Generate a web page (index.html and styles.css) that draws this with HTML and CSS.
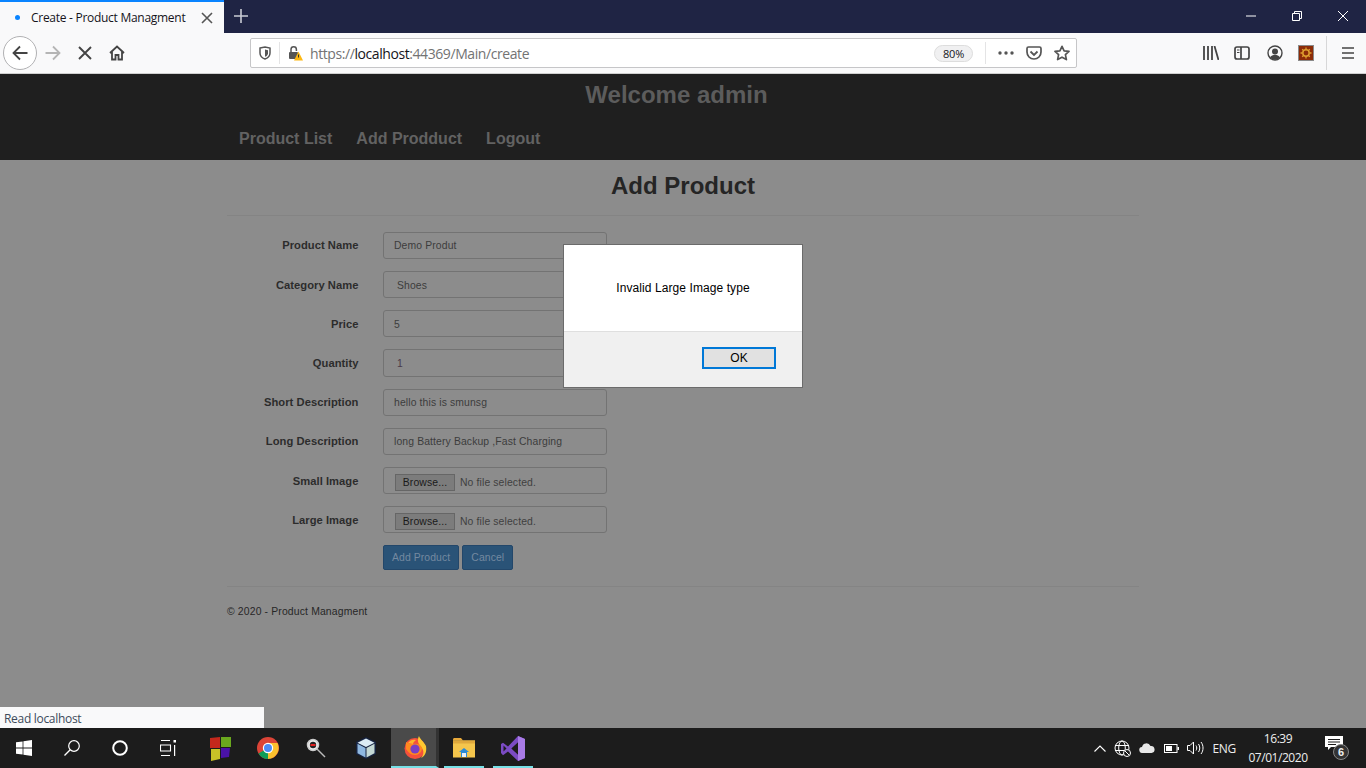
FILE: index.html
```html
<!DOCTYPE html>
<html lang="en">
<head>
<meta charset="utf-8">
<title>Create - Product Managment</title>
<link rel="stylesheet" href="styles.css">
</head>
<body>
<div class="screen">
  <header class="tabbar">
    <div class="tab">
      <span class="tab-dot"></span>
      <span class="tab-title">Create - Product Managment</span>
      <svg class="tab-close" width="12" height="12" viewBox="0 0 12 12"><path d="M1 1l10 10M11 1L1 11" stroke="#555" stroke-width="1.6" fill="none"/></svg>
    </div>
    <svg class="new-tab" width="14" height="14" viewBox="0 0 14 14"><path d="M7 0v14M0 7h14" stroke="#c9cbd4" stroke-width="1.6" fill="none"/></svg>
    <div class="win-controls">
      <svg width="10" height="10" viewBox="0 0 10 10"><path d="M0 5h10" stroke="#fff" stroke-width="1" fill="none"/></svg>
      <svg width="10" height="10" viewBox="0 0 10 10"><path d="M.5 2.500h7v7h-7zM2.500 2.500v-2h7v7h-2" stroke="#fff" stroke-width="1" fill="none"/></svg>
      <svg width="10" height="10" viewBox="0 0 10 10"><path d="M0 0l10 10M10 0L0 10" stroke="#fff" stroke-width="1" fill="none"/></svg>
    </div>
  </header>

  <nav class="toolbar">
    <div class="back-btn">
      <svg width="16" height="16" viewBox="0 0 16 16"><path d="M15.500 8H1.500M8 1.500L1.500 8 8 14.500" stroke="#444" stroke-width="1.800" fill="none"/></svg>
    </div>
    <svg class="tb-forward" width="16" height="16" viewBox="0 0 16 16"><path d="M.5 8h14M8 1.500L14.500 8 8 14.500" stroke="#b5b5b5" stroke-width="1.800" fill="none"/></svg>
    <svg class="tb-stop" width="14" height="14" viewBox="0 0 14 14"><path d="M1 1l12 12M13 1L1 13" stroke="#444" stroke-width="1.900" fill="none"/></svg>
    <svg class="tb-home" width="16" height="16" viewBox="0 0 16 16"><path d="M1 8l7-6.500L15 8M3 6.500V14.500h3.500V10h3v4.500H13V6.500" stroke="#444" stroke-width="1.800" fill="none"/></svg>

    <div class="urlbar">
      <svg class="url-shield" width="12" height="14" viewBox="0 0 12 14"><path d="M1 2l5-1 5 1v5c0 3-2 5-5 6-3-1-5-3-5-6z" stroke="#555" stroke-width="1.500" fill="none"/><path d="M6 3.500l3 .7v3c0 1.600-1 2.800-3 3.600z" fill="#555"/></svg>
      <span class="url-sep"></span>
      <svg class="url-lock" width="15" height="16" viewBox="0 0 15 16"><path d="M3 7V4.500a2.700 2.700 0 0 1 5.400 0V6" stroke="#555" stroke-width="1.500" fill="none"/><rect x="1" y="7" width="9" height="7" rx="1" fill="#555"/><path d="M10.500 6.500L15 15.500H6z" fill="#fdb813"/><path d="M10.500 9.500v3" stroke="#333" stroke-width="1"/></svg>
      <span class="url-text">https://<b class="url-host">localhost</b>:44369/Main/create</span>
      <span class="zoom-pill">80%</span>
      <span class="url-sep sep-right"></span>
      <svg class="url-dots" width="16" height="4" viewBox="0 0 16 4"><circle cx="2" cy="2" r="1.700" fill="#555"/><circle cx="8" cy="2" r="1.700" fill="#555"/><circle cx="14" cy="2" r="1.700" fill="#555"/></svg>
      <svg class="url-pocket" width="16" height="14" viewBox="0 0 16 14"><path d="M1 2.500C1 1.500 1.500 1 2.500 1h11c1 0 1.500.5 1.500 1.500V6c0 4-3 7-7 7S1 10 1 6z" stroke="#555" stroke-width="1.700" fill="none"/><path d="M4.500 5.500L8 9l3.500-3.500" stroke="#555" stroke-width="1.800" fill="none"/></svg>
      <svg class="url-star" width="16" height="16" viewBox="0 0 16 16"><path d="M8 1.300l2.100 4.500 4.900.6-3.600 3.300 1 4.900L8 12.200l-4.400 2.400 1-4.900L1 6.400l4.900-.6z" stroke="#555" stroke-width="1.700" stroke-linejoin="round" fill="none"/></svg>
    </div>

    <svg class="tb-library" width="16" height="14" viewBox="0 0 16 14"><path d="M1 0v14M5 0v14M9 0v14M11.500 0l4 14" stroke="#444" stroke-width="1.800" fill="none"/></svg>
    <svg class="tb-sidebar" width="16" height="14" viewBox="0 0 16 14"><rect x="1" y="1" width="14" height="12" rx="2" stroke="#444" stroke-width="1.700" fill="none"/><path d="M7 1v12" stroke="#444" stroke-width="1.700"/><path d="M3 4h2.500M3 6.500h2.500" stroke="#444" stroke-width="1"/></svg>
    <svg class="tb-account" width="16" height="16" viewBox="0 0 16 16"><circle cx="8" cy="8" r="7" stroke="#444" stroke-width="1.400" fill="none"/><circle cx="8" cy="6.500" r="3" fill="#444"/><path d="M3 12.500c1-2 3-2.800 5-2.800s4 .8 5 2.800c-1.500 1.500-3 2.200-5 2.200s-3.500-.7-5-2.200z" fill="#444"/></svg>
    <svg class="tb-ext" width="16" height="16" viewBox="0 0 16 16"><rect width="16" height="16" fill="#8a8a8a"/><rect x="1" y="1" width="14" height="14" fill="#8c2c08"/><circle cx="8" cy="8" r="3.200" stroke="#e0a030" stroke-width="1.500" fill="none"/><path d="M8 2.500v2M8 11.500v2M2.500 8h2M11.500 8h2M4.200 4.200l1.400 1.400M10.400 10.400l1.400 1.400M11.800 4.200l-1.400 1.400M5.600 10.400l-1.400 1.400" stroke="#e0a030" stroke-width="1.300"/></svg>
    <span class="tb-sep"></span>
    <svg class="tb-menu" width="12" height="12" viewBox="0 0 12 12"><path d="M0 1h12M0 6h12M0 11h12" stroke="#444" stroke-width="1.700" fill="none"/></svg>
  </nav>

  <main class="page">
    <div class="site-nav">
      <h1 class="welcome">Welcome admin</h1>
      <ul class="nav-links">
        <li>Product List</li>
        <li>Add Prodduct</li>
        <li>Logout</li>
      </ul>
    </div>
    <div class="content">
      <h2 class="page-title">Add Product</h2>
      <div class="rule rule-top"></div>
      <form class="form">
        <div class="row"><label class="lbl">Product Name</label><div class="field">Demo Produt</div></div>
        <div class="row"><label class="lbl">Category Name</label><div class="field field-select field-low">Shoes</div></div>
        <div class="row"><label class="lbl">Price</label><div class="field field-low">5</div></div>
        <div class="row"><label class="lbl">Quantity</label><div class="field field-select field-low field-num">1</div></div>
        <div class="row"><label class="lbl">Short Description</label><div class="field">hello this is smunsg</div></div>
        <div class="row"><label class="lbl">Long Description</label><div class="field">long Battery Backup ,Fast Charging</div></div>
        <div class="row"><label class="lbl">Small Image</label><div class="field field-file"><span class="browse">Browse...</span><span class="nofile">No file selected.</span></div></div>
        <div class="row"><label class="lbl">Large Image</label><div class="field field-file"><span class="browse">Browse...</span><span class="nofile">No file selected.</span></div></div>
        <div class="actions"><span class="btn">Add Product</span><span class="btn">Cancel</span></div>
      </form>
      <div class="rule rule-bottom"></div>
      <footer class="foot">© 2020 - Product Managment</footer>
    </div>

    <div class="status">Read localhost</div>

    <div class="dialog">
      <div class="dialog-body">Invalid Large Image type</div>
      <div class="dialog-foot"><span class="ok">OK</span></div>
    </div>
  </main>

  <footer class="taskbar">
    <div class="task"><svg width="16" height="16" viewBox="0 0 16 16"><path d="M0 2.300l6.600-.9v6.200H0zM7.400 1.300L16 0v7.600H7.400zM0 8.400h6.600v6.200L0 13.700zM7.400 8.400H16V16l-8.600-1.300z" fill="#fff"/></svg></div>
    <div class="task"><svg width="16" height="16" viewBox="0 0 16 16"><circle cx="10" cy="6" r="5.300" stroke="#fff" stroke-width="1.200" fill="none"/><path d="M6.200 9.800L.5 15.500" stroke="#fff" stroke-width="1.300"/></svg></div>
    <div class="task"><svg width="16" height="16" viewBox="0 0 16 16"><circle cx="8" cy="8" r="6.800" stroke="#fff" stroke-width="2" fill="none"/></svg></div>
    <div class="task"><svg width="16" height="16" viewBox="0 0 16 16"><path d="M1 .5h9M1 15.500h9M.5 5h10v6H.5z" stroke="#fff" stroke-width="1.100" fill="none"/><path d="M13.500 0h2.500v2.500h-2.500zM14 5h1.200v11H14z" fill="#fff"/></svg></div>
    <div class="task task-squares"><svg width="22" height="25" viewBox="0 0 22 25"><path d="M1 2l10-1v11H1z" fill="#c4281c"/><path d="M12 1l10 0v10H12z" fill="#6aa81e"/><path d="M2 13h9v10l-9 2z" fill="#c9c227"/><path d="M12 12h9l-1 9-8 1z" fill="#4a12a8"/></svg></div>
    <div class="task"><svg width="22" height="22" viewBox="0 0 22 22"><circle cx="11" cy="11" r="11" fill="#db4437"/><path d="M11 11L1.500 16.500A11 11 0 0 0 11 22c1 0 2 0 3-.4z" fill="#0f9d58"/><path d="M11 6h9.500a11 11 0 0 1-9.500 16z" fill="#fbc02d"/><circle cx="11" cy="11" r="5.200" fill="#fff"/><circle cx="11" cy="11" r="4" fill="#4c8bf5"/></svg></div>
    <div class="task"><svg width="20" height="20" viewBox="0 0 20 20"><circle cx="7" cy="7" r="5.500" fill="#eee" stroke="#ccc" stroke-width="1.500"/><circle cx="7" cy="7" r="3.200" fill="#222"/><path d="M4.500 7h5" stroke="#e02020" stroke-width="2"/><path d="M11 11l8 8" stroke="#bbb" stroke-width="1.500"/></svg></div>
    <div class="task task-cube"><svg width="22" height="24" viewBox="0 0 22 24"><path d="M11 1l10 5v12l-10 5-10-5V6z" fill="#16223f"/><path d="M11 2.500l8.500 4.300L11 11 2.500 6.800z" fill="#dcecf5"/><path d="M2.500 7.800L10.500 12v9.500l-8-4.200z" fill="#8fb8e0"/><path d="M19.500 7.800L11.500 12v9.500l8-4.200z" fill="#c4d8d4"/></svg></div>
    <div class="task task-active"><svg width="24" height="24" viewBox="0 0 24 24"><circle cx="12" cy="13.500" r="10.500" fill="#f5503c"/><path d="M16 1c1 3 5 6 7 10 1 6-1 10-5 12 3-3 3-7 1-10-1-2-4-4-4-7 0-2 0-3 1-5z" fill="#ffc830"/><path d="M3 7c2 1 4 2 7 2 4-1 8 0 9 4 0 4-3 7-7 7-4 0-7-3-9-6z" fill="#ff8a1f"/><circle cx="12" cy="14" r="4.600" fill="#7a3fc4"/><path d="M5 8c2-3 5-4 8-3-1 1-3 2-3 4z" fill="#ffb52c"/></svg></div>
    <div class="task task-open"><svg width="22" height="20" viewBox="0 0 22 20"><path d="M0 1.500C0 .7.500 0 1.500 0H8l2 2.500H0z" fill="#e8a93a"/><rect y="2.500" width="22" height="17" fill="#f5c64c"/><rect y="2.500" width="22" height="3" fill="#e0a93c"/><path d="M6 14l5-4 5 4h-2v5H8v-5z" fill="#2a8ad6"/><rect x="9" y="15" width="4" height="4" fill="#e9f0f6"/></svg></div>
    <div class="task task-open"><svg width="24" height="25" viewBox="0 0 24 25"><path d="M17 0l7 3v19l-7 3-10-9.500-5 3.700L0 17V8l2-1.200 5 3.700z" fill="#7b4bc4"/><path d="M17 6.500L10.500 12.500l6.500 6z" fill="#1c1c1c"/><path d="M2.500 9.500v6l3-3z" fill="#1c1c1c"/><path d="M17 0l7 3v19l-7 3z" fill="#a97be6"/><path d="M17 6.500v12l-6.500-6z" fill="#1c1c1c"/></svg></div>
    <div class="tray">
      <svg class="tray-up" width="12" height="7" viewBox="0 0 12 7"><path d="M.5 6.500L6 1l5.500 5.500" stroke="#fff" stroke-width="1.100" fill="none"/></svg>
      <svg class="tray-globe" width="17" height="17" viewBox="0 0 17 17"><circle cx="8" cy="8" r="7" stroke="#fff" stroke-width="1" fill="none"/><ellipse cx="8" cy="8" rx="3.300" ry="7" stroke="#fff" stroke-width="1" fill="none"/><path d="M1 5.500h14M1 10.500h14" stroke="#fff" stroke-width="1"/><circle cx="13" cy="13" r="3.500" fill="#1c1c1c" stroke="#fff" stroke-width="1"/><path d="M11 11l4 4" stroke="#fff" stroke-width="1"/></svg>
      <svg class="tray-cloud" width="16" height="10" viewBox="0 0 16 10"><path d="M3.500 10a3 3 0 0 1-.5-6A4.500 4.500 0 0 1 11.500 3a3.500 3.500 0 0 1 1 7z" fill="#e8e8e8"/></svg>
      <svg class="tray-bat" width="15" height="9" viewBox="0 0 15 9"><rect x=".5" y=".5" width="12.500" height="8" stroke="#fff" fill="none"/><rect x="2" y="2" width="6" height="5" fill="#fff"/><rect x="13.500" y="3" width="1.500" height="3" fill="#fff"/></svg>
      <svg class="tray-vol" width="17" height="14" viewBox="0 0 17 14"><path d="M.5 4.500h2.500L6.500 1v12L3 9.500H.5z" stroke="#fff" stroke-width="1" fill="none"/><path d="M9 4.500c1 1.500 1 3.500 0 5M11.500 3c1.700 2.500 1.700 5.500 0 8M14 1c2.700 3.500 2.700 8.500 0 12" stroke="#fff" stroke-width="1" fill="none"/></svg>
      <span class="tray-lang">ENG</span>
      <div class="clock"><span>16:39</span><span>07/01/2020</span></div>
      <div class="notif">
        <svg width="18" height="14" viewBox="0 0 18 14"><path d="M0 0h18v11H6l-3 3v-3H0z" fill="#fff"/><path d="M3 3.500h12M3 6h12M3 8.500h8" stroke="#1c1c1c" stroke-width="1"/></svg>
        <span class="notif-badge">6</span>
      </div>
    </div>
  </footer>
</div>
</body>
</html>
```

FILE: styles.css
```css
* { box-sizing: border-box; }
html, body { margin: 0; padding: 0; height: 100%; overflow: hidden; }
body { font-family: "Liberation Sans", Arial, sans-serif; }
svg { display: block; flex: none; }

.screen { width: 1366px; height: 768px; display: flex; flex-direction: column; }

/* browser tab strip */
.tabbar { height: 33px; background: #1f2444; display: flex; align-items: center; flex: none; }
.tab { width: 224px; height: 33px; background: #f9f9fa; border-top: 2px solid #0a84ff; display: flex; align-items: center; padding-left: 15px; font-family: "Open Sans", sans-serif; font-size: 12px; color: #15141a; }
.tab-dot { width: 5px; height: 5px; border-radius: 50%; background: #0a84ff; margin-right: 11px; }
.tab-title { letter-spacing: -0.28px; white-space: nowrap; width: 155px; }
.tab-close { margin-left: 15px; }
.new-tab { margin-left: 10px; margin-top: -2px; }
.win-controls { margin-left: auto; display: flex; gap: 36px; padding-right: 18px; margin-top: -2px; }

/* browser toolbar */
.toolbar { height: 41px; background: #f9f9fa; border-bottom: 1px solid #cfcfcf; display: flex; align-items: center; flex: none; padding-left: 3px; }
.back-btn { width: 34px; height: 34px; border: 1px solid #b1b1b3; border-radius: 50%; background: #fff; display: flex; align-items: center; justify-content: center; }
.tb-forward { margin-left: 8px; }
.tb-stop { margin-left: 17px; }
.tb-home { margin-left: 17px; }

.urlbar { width: 827px; height: 30px; margin-left: 125px; background: #fff; border: 1px solid #c6c6c8; border-radius: 2px; display: flex; align-items: center; font-size: 14px; font-family: "Open Sans", sans-serif; color: #737373; }
.url-shield { margin-left: 8px; }
.url-sep { width: 1px; height: 22px; background: #e4e4e5; margin-left: 8px; }
.url-lock { margin-left: 8px; }
.url-text { margin-left: 7px; letter-spacing: -0.42px; white-space: nowrap; width: 400px; }
.url-host { font-weight: 400; color: #15141a; }
.zoom-pill { margin-left: 224px; width: 39px; height: 17px; border: 1px solid #ddd; border-radius: 9px; background: #f0f0f1; color: #15141a; font-size: 11px; display: flex; align-items: center; justify-content: center; letter-spacing: -0.2px; }
.sep-right { margin-left: 12px; }
.url-dots { margin-left: 12px; }
.url-pocket { margin-left: 12px; }
.url-star { margin-left: 12px; }

.tb-library { margin-left: 126px; }
.tb-sidebar { margin-left: 15px; }
.tb-account { margin-left: 17px; }
.tb-ext { margin-left: 15px; }
.tb-sep { width: 1px; height: 34px; background: #d7d7d8; margin-left: 12px; }
.tb-menu { margin-left: 15px; }

/* page, dimmed by the modal */
.page { height: 654px; flex: none; background: #8c8c8c; position: relative; overflow: hidden; }
.site-nav { height: 86px; background: #1f1f1f; padding-left: 239px; }
.welcome { margin: 0; font-size: 24px; line-height: 28px; font-weight: 700; color: #5c5c5c; width: 875px; text-align: center; padding-top: 7px; height: 42px; }
.nav-links { list-style: none; margin: 13px 0 0; padding: 0; display: flex; gap: 24px; font-size: 16px; font-weight: 700; color: #626262; line-height: 20px; }

.content { width: 912px; margin-left: 227px; }
.page-title { margin: 0; font-size: 24px; line-height: 28px; font-weight: 700; color: #252525; text-align: center; padding-top: 12px; height: 55px; }
.rule { height: 1px; background: #848484; }
.form { padding-top: 15.8px; }
.row { height: 27.2px; margin-bottom: 12px; display: flex; align-items: center; }
.lbl { width: 131.5px; text-align: right; font-size: 11.2px; font-weight: 700; color: #2c2c2c; letter-spacing: .04px; }
.field { width: 224px; height: 100%; margin-left: 24.5px; border: 1px solid #737373; border-radius: 3px; font-size: 10.4px; color: #3c3c3c; padding-left: 10px; display: flex; align-items: center; letter-spacing: .12px; }
.field-select { padding-left: 13px; }
.field-low { padding-top: 1px; }
.field-num { color: #4a3a4a; }
.field-file { padding-left: 11px; padding-top: 4px; }
.browse { width: 60px; height: 17px; border: 1px solid #666; background: #7c7c7c; color: #1a1a1a; display: flex; align-items: center; justify-content: center; }
.nofile { margin-left: 5px; color: #3f3f3f; }
.actions { display: flex; gap: 3px; margin-left: 156px; height: 25px; }
.btn { background: #2a5377; border: 1px solid #23476a; border-radius: 2px; color: #7489a0; font-size: 10.4px; letter-spacing: .1px; height: 25px; padding: 0 8px; display: flex; align-items: center; }
.rule-bottom { margin-top: 15.6px; }
.foot { margin-top: 18px; font-size: 10.4px; letter-spacing: .15px; line-height: 14px; color: #272727; }

.status { position: absolute; left: 0; bottom: 0; width: 264px; height: 21px; background: #f9f9fa; font-family: "Open Sans", sans-serif; font-size: 12px; line-height: 24px; color: #3c4a5a; padding-left: 4px; letter-spacing: -0.3px; }

.dialog { position: absolute; left: 563px; top: 170px; width: 240px; height: 144px; background: #fff; border: 1px solid #6b6b6b; display: flex; flex-direction: column; }
.dialog-body { height: 86px; display: flex; align-items: center; justify-content: center; font-size: 12px; color: #000; letter-spacing: .08px; }
.dialog-foot { flex: 1; background: #f0f0f0; border-top: 1px solid #dfdfdf; display: flex; justify-content: flex-end; padding: 15px 26px 0 0; }
.ok { width: 74px; height: 22px; border: 2px solid #0078d7; background: #e1e1e1; font-size: 12px; color: #000; display: flex; align-items: center; justify-content: center; }

/* windows taskbar */
.taskbar { height: 40px; background: #1c1c1c; display: flex; flex: none; color: #fff; }
.task { width: 48px; height: 40px; display: flex; align-items: center; justify-content: center; flex: none; }
.task-squares { margin-left: 4px; }
.task-cube { margin-left: 2px; }
.task-active { margin-left: 1px; background: #4a4a4a; border-bottom: 2px solid #76e0e6; border-right: 3px solid #333; padding-left: 3px; }
.task-open { margin-left: 1px; position: relative; }
.task-open::after { content: ""; position: absolute; left: 4px; right: 4px; bottom: 0; height: 2px; background: #76e0e6; }
.tray { margin-left: auto; display: flex; align-items: center; }
.tray-globe { margin-left: 8px; }
.tray-cloud { margin-left: 8px; }
.tray-bat { margin-left: 9px; }
.tray-vol { margin-left: 8px; }
.tray-lang { margin-left: 8px; font-family: "Open Sans", sans-serif; font-size: 12px; letter-spacing: -0.3px; color: #eee; }
.clock { width: 72px; margin-left: 6px; display: flex; flex-direction: column; align-items: center; font-family: "Open Sans", sans-serif; font-size: 12px; line-height: 19px; color: #eee; letter-spacing: -0.45px; }
.notif { position: relative; width: 24px; height: 24px; margin-left: 11px; margin-right: 17px; }
.notif-badge { position: absolute; left: 8px; top: 8px; width: 16px; height: 16px; border-radius: 50%; background: #333; border: 1px solid #888; font-size: 11px; font-weight: 700; display: flex; align-items: center; justify-content: center; color: #eee; }
```
